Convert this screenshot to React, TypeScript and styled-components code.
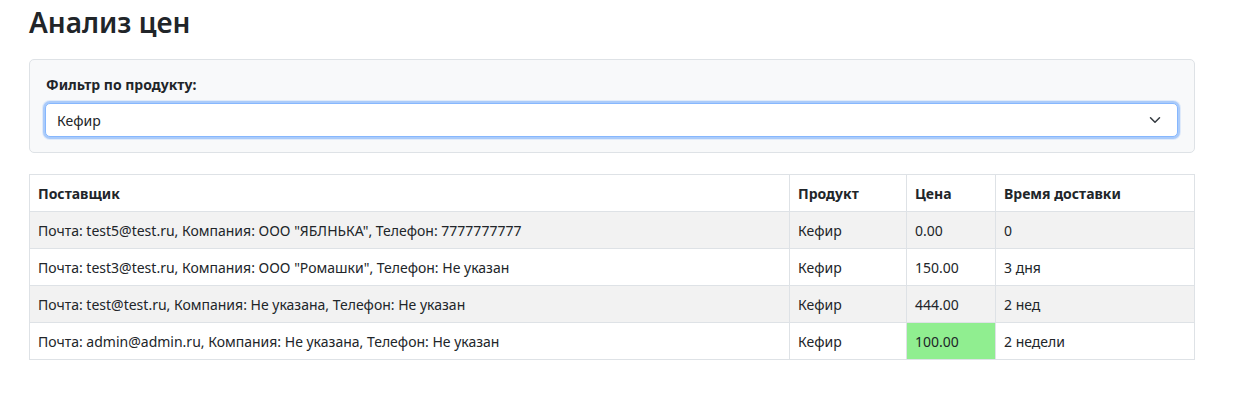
import React from "react";
import styled, { createGlobalStyle } from "styled-components";

const Global = createGlobalStyle`
  html, body { margin: 0; padding: 0; background: #fff; }
  body { font-family: "Noto Sans", "Open Sans", sans-serif; color: #212529; font-size: 14px; }
  * { box-sizing: border-box; }
`;

const Page = styled.div`
  width: 1166px;
  margin-left: 29px;
  padding-top: 3px;
`;

const Title = styled.h1`
  margin: 0 0 18px 0;
  font-size: 28px;
  font-weight: 600;
  line-height: 38px;
  color: #212529;
`;

const FilterCard = styled.div`
  background: #f8f9fa;
  border: 1px solid #dee2e6;
  border-radius: 5px;
  padding: 15px 15px 15px 14px;
  margin-bottom: 21px;
`;

const Label = styled.label`
  display: block;
  font-weight: 700;
  font-size: 14px;
  line-height: 20px;
  margin: 0 0 8px 2px;
`;

const SelectBox = styled.div`
  display: flex;
  align-items: center;
  justify-content: space-between;
  height: 34px;
  background: #fff;
  border: 1px solid #86b7fe;
  border-radius: 5px;
  box-shadow: 0 0 0 2px rgba(13, 110, 253, 0.25), 0 0 0 3px rgba(13, 110, 253, 0.1);
  padding: 0 16px 0 11px;
  font-size: 14px;
  margin: 0 1px 0 1px;
`;

const Table = styled.table`
  width: 1165px;
  border-collapse: collapse;
  table-layout: fixed;
  font-size: 14px;
`;

const Th = styled.th<{ $w: number }>`
  text-align: left;
  font-weight: 700;
  padding: 0 8px;
  height: 37px;
  border: 1px solid #dee2e6;
  width: ${(p) => p.$w}px;
`;

const Row = styled.tr<{ $striped: boolean }>`
  background: ${(p) => (p.$striped ? "#f2f2f2" : "#fff")};
`;

const Td = styled.td<{ $best?: boolean }>`
  padding: 0 8px;
  height: 37px;
  border: 1px solid #dee2e6;
  background: ${(p) => (p.$best ? "#90ee90" : "transparent")};
  white-space: nowrap;
`;

const rows = [
  { s: 'Почта: test5@test.ru, Компания: ООО "ЯБЛНЬКА", Телефон: 7777777777', p: "Кефир", price: "0.00", d: "0" },
  { s: 'Почта: test3@test.ru, Компания: ООО "Ромашки", Телефон: Не указан', p: "Кефир", price: "150.00", d: "3 дня" },
  { s: "Почта: test@test.ru, Компания: Не указана, Телефон: Не указан", p: "Кефир", price: "444.00", d: "2 нед" },
  { s: "Почта: admin@admin.ru, Компания: Не указана, Телефон: Не указан", p: "Кефир", price: "100.00", d: "2 недели", best: true },
];

export default function App() {
  return (
    <Page>
      <Global />
      <Title>Анализ цен</Title>
      <FilterCard>
        <Label>Фильтр по продукту:</Label>
        <SelectBox>
          <span>Кефир</span>
          <svg width="12" height="12" viewBox="0 0 16 16" fill="none">
            <path d="M2 5l6 6 6-6" stroke="#343a40" strokeWidth="2" strokeLinecap="round" strokeLinejoin="round" />
          </svg>
        </SelectBox>
      </FilterCard>
      <Table>
        <thead>
          <tr>
            <Th $w={760}>Поставщик</Th>
            <Th $w={117}>Продукт</Th>
            <Th $w={89}>Цена</Th>
            <Th $w={199}>Время доставки</Th>
          </tr>
        </thead>
        <tbody>
          {rows.map((r, i) => (
            <Row key={i} $striped={i % 2 === 0}>
              <Td>{r.s}</Td>
              <Td>{r.p}</Td>
              <Td $best={r.best}>{r.price}</Td>
              <Td>{r.d}</Td>
            </Row>
          ))}
        </tbody>
      </Table>
    </Page>
  );
}
